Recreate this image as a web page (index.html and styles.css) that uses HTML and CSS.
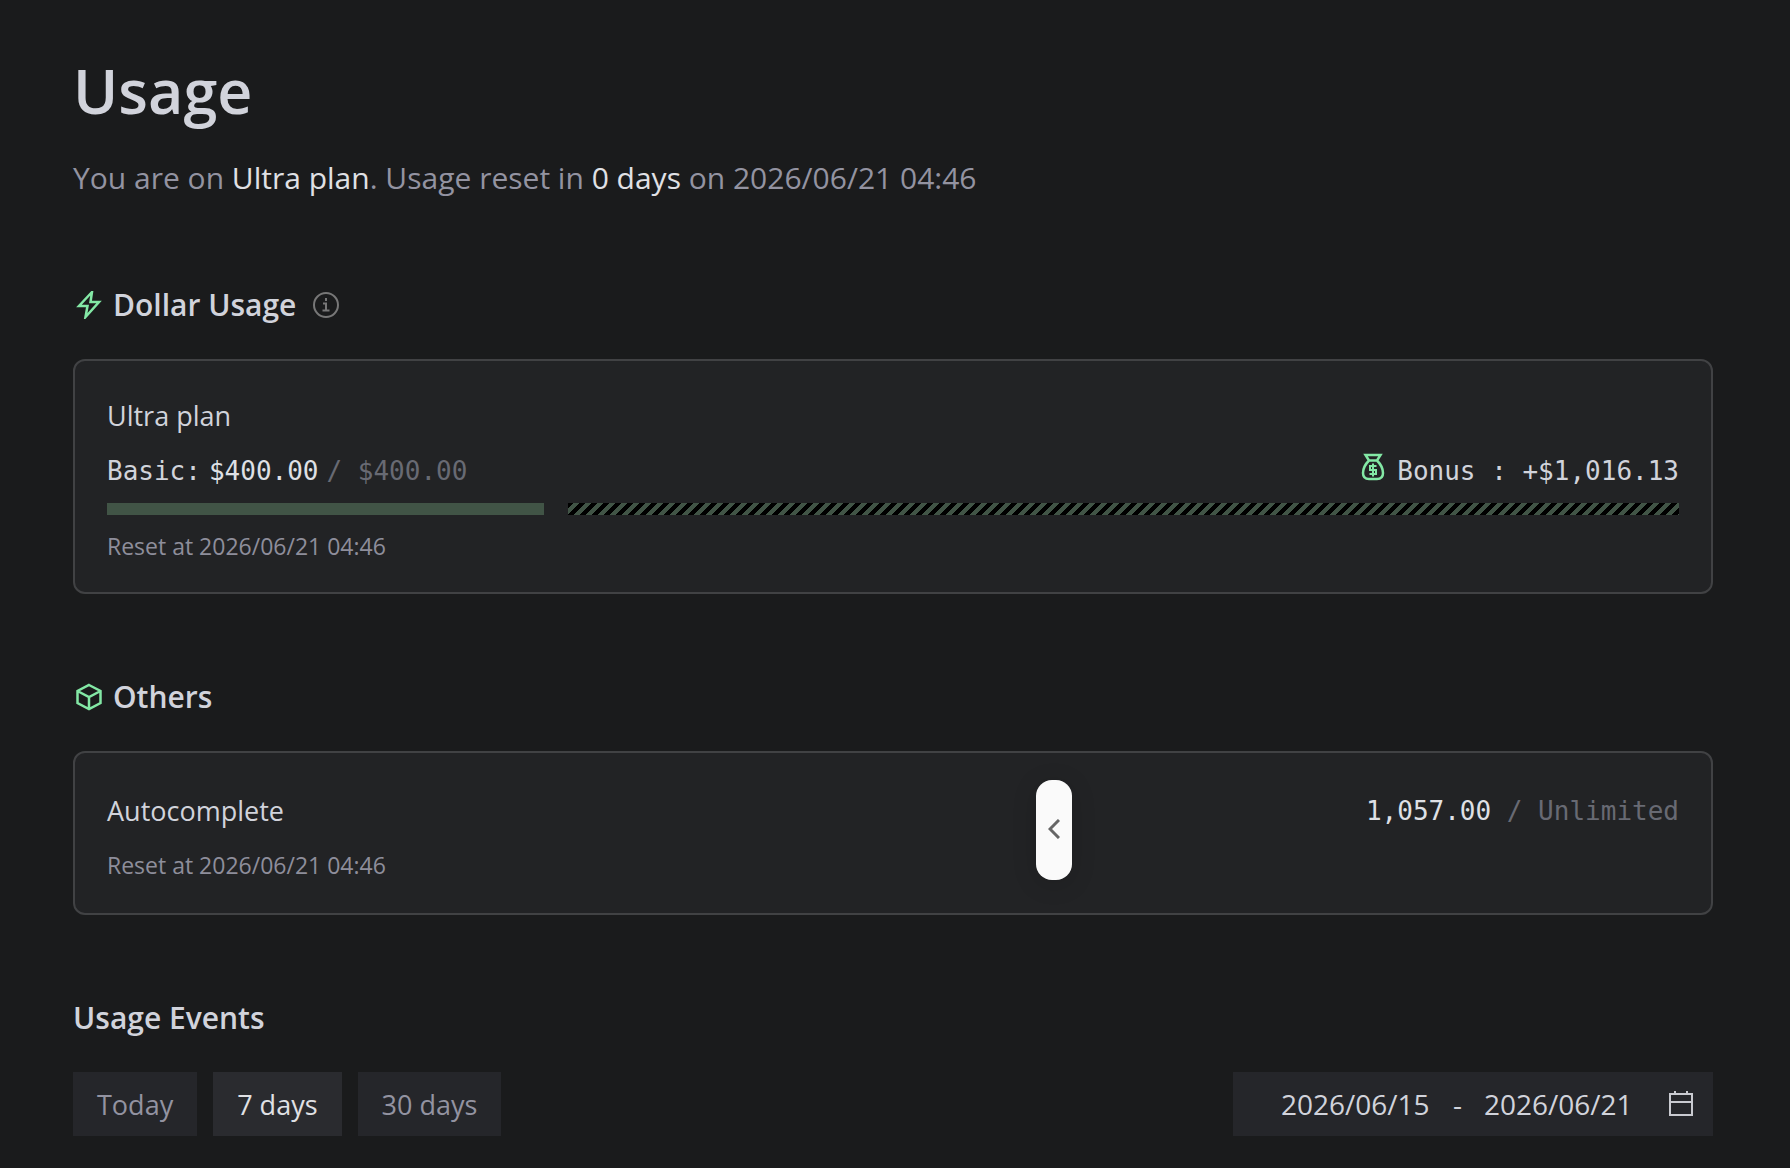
FILE: index.html
```html
<!DOCTYPE html>
<html lang="en">
<head>
  <meta charset="UTF-8" />
  <title>Usage</title>
  <meta name="viewport" content="width=device-width, initial-scale=1.0"/>
  <link rel="stylesheet" href="styles.css">
</head>
<body>
<main>
  <h1>Usage</h1>
  <p class="subtitle">You are on <span>Ultra plan</span>. Usage reset in <span>0 days</span> on 2026/06/21 04:46</p>

  <section>
    <h2>
      <svg class="icon green" viewBox="0 0 28 28"><path d="M17 1 4 15h8.500L10.500 26 24 11h-8.500z"/></svg>
      Dollar Usage
      <svg class="icon info" viewBox="0 0 28 28"><circle cx="14" cy="14" r="12"/><path d="M11 12.500h3v7M10.500 19.500h7M14 7v3"/></svg>
    </h2>
    <div class="card">
      <div class="name">Ultra plan</div>
      <div class="row amounts">
        <div class="basic">
          <span>Basic:</span>
          <strong>$400.00</strong>
          <span class="limit">/ $400.00</span>
        </div>
        <div class="bonus">
          <svg class="icon green" viewBox="0 0 28 28"><path d="M6.500 2h15l-3.500 5.500h-8zM10 7.500C6 11.500 4 15.500 4 20c0 4 2 6 6 6h8c4 0 6-2 6-6 0-4.500-2-8.500-6-12.500"/><path stroke-width="2" d="M17.500 13H11v4h6v4h-6.500M14 10.500v13"/></svg>
          <span>Bonus : +$1,016.13</span>
        </div>
      </div>
      <div class="bars">
        <div class="bar" style="flex-grow:400"></div>
        <div class="bar striped" style="flex-grow:1016.13"></div>
      </div>
      <div class="reset">Reset at 2026/06/21 04:46</div>
    </div>
  </section>

  <section>
    <h2>
      <svg class="icon green" viewBox="0 0 28 28"><path d="M14 2 25.500 8v12L14 26 2.500 20V8zM2.500 8 14 14l11.500-6M14 14v12"/></svg>
      Others
    </h2>
    <div class="card others">
      <div class="row">
        <div class="name">Autocomplete</div>
        <div class="count"><strong>1,057.00</strong> <span class="limit">/ Unlimited</span></div>
      </div>
      <div class="reset">Reset at 2026/06/21 04:46</div>
      <button type="button" class="handle" aria-label="Open panel">
        <svg viewBox="0 0 12 20"><path d="M11 1 2 10l9 9"/></svg>
      </button>
    </div>
  </section>

  <section>
    <h2>Usage Events</h2>
    <div class="row filters">
      <div class="ranges">
        <button type="button">Today</button>
        <button type="button" class="active">7 days</button>
        <button type="button">30 days</button>
      </div>
      <div class="dates">
        <input type="text" value="2026/06/15" aria-label="Start date">
        <span>-</span>
        <input type="text" value="2026/06/21" aria-label="End date">
        <svg class="calendar" viewBox="0 0 28 28"><path d="M3 4h22v21H3zM3 12h22M8 4V1M20 4V1"/></svg>
      </div>
    </div>
  </section>
</main>
</body>
</html>
```
FILE: styles.css
```css
* {
  box-sizing: border-box;
}

body {
  font-family: 'Open Sans', sans-serif;
  background: #1a1b1c;
  color: #d1d3db;
  margin: 0;
}

main {
  padding: 46px 77px 32px 73px;
}

h1 {
  font-size: 61px;
  line-height: 90px;
  font-weight: 600;
  margin: 0 0 18px;
}

.subtitle {
  font-size: 30px;
  line-height: 48px;
  color: #9393a1;
  margin: 0;
}

.subtitle span {
  color: #e0e1e5;
}

section {
  margin-top: 81px;
}

h2 {
  display: flex;
  align-items: center;
  gap: 8px;
  font-size: 30px;
  line-height: 44px;
  font-weight: 600;
  margin: 0 0 32px;
}

.icon {
  width: 28px;
  height: 28px;
  margin: 0 2px;
  flex: none;
  fill: none;
  stroke: #777;
  stroke-width: 2;
}

.green {
  stroke: #83e8a5;
  stroke-width: 2.5;
}

.info {
  margin-left: 8px;
}

.card {
  position: relative;
  background: #222325;
  border: 2px solid #414244;
  border-radius: 12px;
  padding: 32px 32px 30px;
}

.row {
  display: flex;
  justify-content: space-between;
  align-items: center;
}

.name {
  font-size: 27px;
  line-height: 46px;
}

.amounts, .count {
  font-family: 'DejaVu Sans Mono', monospace;
  font-size: 26px;
  line-height: 40px;
}

.amounts {
  margin-top: 12px;
}

.basic, .bonus {
  display: flex;
  align-items: center;
  gap: 8px;
}

.bonus .icon {
  margin-bottom: 8px;
}

strong {
  font-weight: normal;
  color: #dfe0e5;
}

.limit {
  color: #686a73;
}

.bars {
  display: flex;
  gap: 24px;
  margin: 12px 0 15px;
}

.bar {
  height: 12px;
  flex-basis: 0;
  background: #415446;
}

.striped {
  background: linear-gradient(135deg, #000 25%, #415446 25% 50%, #000 50% 75%, #415446 75%);
  background-size: 12px 12px;
}

.reset {
  font-size: 23px;
  line-height: 32px;
  color: #8e8e9b;
}

.others {
  padding-bottom: 32px;
}

.others .row {
  height: 52px;
  margin-bottom: 12px;
}

/* panel toggle, floats over the card */
.handle {
  position: absolute;
  top: 27px;
  left: 961px;
  width: 36px;
  height: 100px;
  padding: 0;
  border: 0;
  border-radius: 16px;
  background: #fafafa;
  box-shadow: 0 4px 24px rgba(0,0,0,0.15);
}

.handle svg {
  width: 12px;
  height: 20px;
  fill: none;
  stroke: #666;
  stroke-width: 3;
}

.ranges {
  display: flex;
  gap: 16px;
  font-size: 27px;
}

.ranges button {
  height: 64px;
  padding: 0 24px;
  border: 0;
  background: #25262a;
  color: #9393a1;
  font: inherit;
}

.ranges .active {
  background: #2a2b2f;
  color: #e0e1e5;
}

.dates {
  display: flex;
  align-items: center;
  justify-content: flex-end;
  width: 480px;
  height: 64px;
  padding: 0 18px;
  background: #25262a;
  font-size: 28px;
}

.dates input {
  width: 150px;
  padding: 0;
  border: 0;
  background: none;
  color: inherit;
  font: inherit;
}

.dates span {
  margin: 0 22px;
}

.calendar {
  width: 28px;
  height: 28px;
  margin-left: 33px;
  fill: none;
  stroke: #c9cad0;
  stroke-width: 2;
}
```
